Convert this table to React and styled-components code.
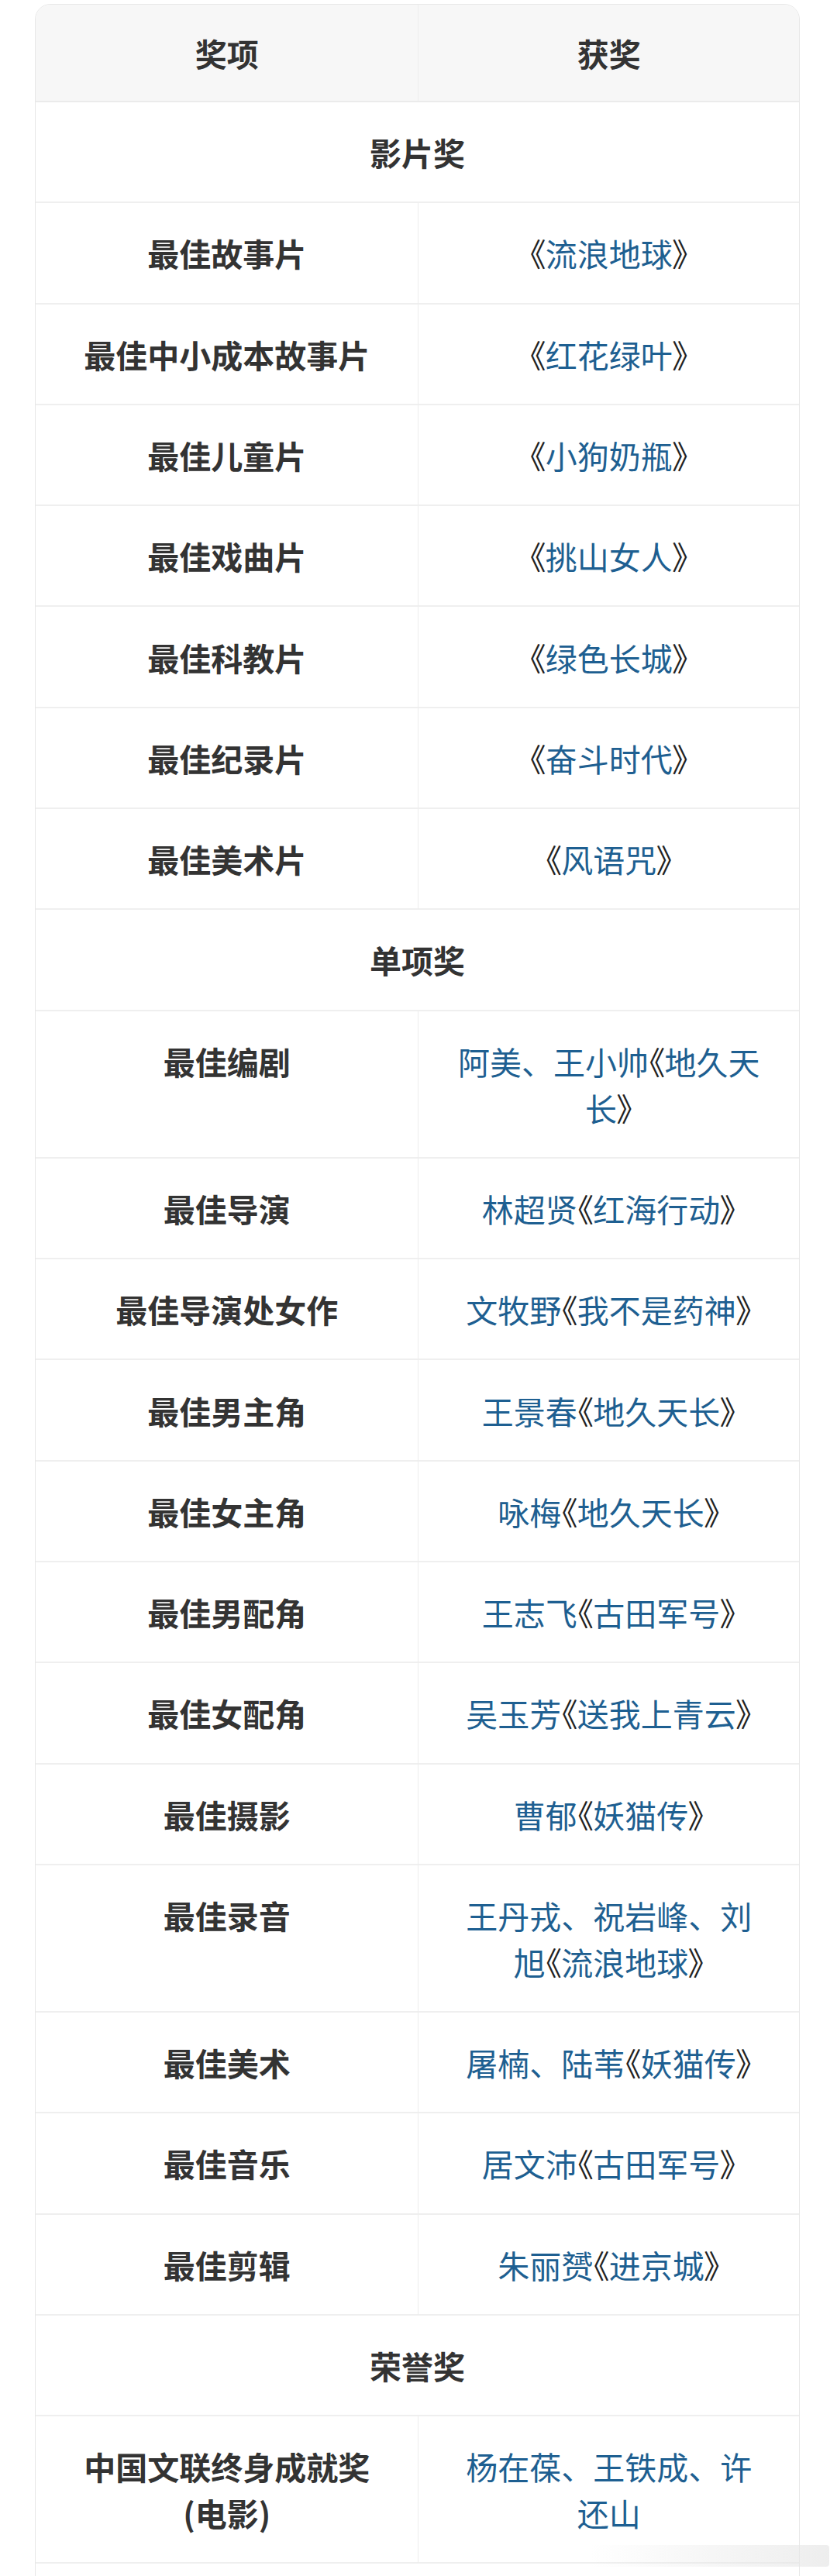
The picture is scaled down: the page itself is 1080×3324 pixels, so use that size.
import React from "react";
import styled, { createGlobalStyle } from "styled-components";

const GlobalStyle = createGlobalStyle`
  body {
    margin: 0;
    background: #fff;
    font-family: "Noto Sans CJK SC", "Noto Sans", sans-serif;
  }
`;

const Page = styled.div`
  position: relative;
  padding: 5px 0 0 45px;
  height: 3324px;
  overflow: hidden;
  box-sizing: border-box;
`;

const Table = styled.table`
  width: 987px;
  table-layout: fixed;
  border-collapse: separate;
  border-spacing: 0;
  border: 1px solid #e7e7e7;
  border-radius: 20px;
  font-size: 41px;
  line-height: 60px;
  color: #333;
`;

const HeadCell = styled.th`
  background: #f7f7f7;
  padding: 32px 20px;
  font-weight: 700;
  text-align: center;
  border-bottom: 2px solid #ebebeb;
  border-right: ${(p) => (p.$first ? "1px solid #ececec" : "none")};
  border-top-left-radius: ${(p) => (p.$first ? "19px" : "0")};
  border-top-right-radius: ${(p) => (p.$first ? "0" : "19px")};
`;

const Cell = styled.td`
  padding: 34.15px 20px;
  text-align: center;
  vertical-align: top;
  border-bottom: 2px solid #efefef;
  font-weight: ${(p) => (p.$bold ? 700 : 400)};
  border-right: ${(p) => (p.$left ? "1px solid #ececec" : "none")};
`;

const Name = styled.span`
  color: #1e5f91;
`;

const Mark = styled.span`
  color: #222;
  font-feature-settings: "palt";
`;

const Smudge = styled.div`
  position: absolute;
  left: 760px;
  top: 3284px;
  width: 310px;
  height: 28px;
  background: linear-gradient(90deg, rgba(235, 235, 235, 0), rgba(230, 230, 230, 0.7));
  border-radius: 4px;
`;

const Book = ({ children }) => (
  <>
    <Mark>《</Mark>
    <Name>{children}</Name>
    <Mark>》</Mark>
  </>
);

const Row = ({ label, children }) => (
  <tr>
    <Cell $left $bold>
      {label}
    </Cell>
    <Cell>{children}</Cell>
  </tr>
);

const Section = ({ children }) => (
  <tr>
    <Cell colSpan={2} $bold>
      {children}
    </Cell>
  </tr>
);

const filmAwards = [
  ["最佳故事片", "流浪地球"],
  ["最佳中小成本故事片", "红花绿叶"],
  ["最佳儿童片", "小狗奶瓶"],
  ["最佳戏曲片", "挑山女人"],
  ["最佳科教片", "绿色长城"],
  ["最佳纪录片", "奋斗时代"],
  ["最佳美术片", "风语咒"],
];

const singleAwards = [
  ["最佳导演", "林超贤", "红海行动"],
  ["最佳导演处女作", "文牧野", "我不是药神"],
  ["最佳男主角", "王景春", "地久天长"],
  ["最佳女主角", "咏梅", "地久天长"],
  ["最佳男配角", "王志飞", "古田军号"],
  ["最佳女配角", "吴玉芳", "送我上青云"],
  ["最佳摄影", "曹郁", "妖猫传"],
];

const laterAwards = [
  ["最佳美术", "屠楠、陆苇", "妖猫传"],
  ["最佳音乐", "居文沛", "古田军号"],
  ["最佳剪辑", "朱丽赟", "进京城"],
];

export default function App() {
  return (
    <>
      <GlobalStyle />
      <Page>
        <Table>
          <colgroup>
            <col style={{ width: "50.2%" }} />
            <col />
          </colgroup>
          <thead>
            <tr>
              <HeadCell $first>奖项</HeadCell>
              <HeadCell>获奖</HeadCell>
            </tr>
          </thead>
          <tbody>
            <Section>影片奖</Section>
            {filmAwards.map(([label, film]) => (
              <Row key={label} label={label}>
                <Book>{film}</Book>
              </Row>
            ))}
            <Section>单项奖</Section>
            <Row label="最佳编剧">
              <Name>阿美、王小帅</Name>
              <Mark>《</Mark>
              <Name>地久天</Name>
              <br />
              <Name>长</Name>
              <Mark>》</Mark>
            </Row>
            {singleAwards.map(([label, who, film]) => (
              <Row key={label} label={label}>
                <Name>{who}</Name>
                <Book>{film}</Book>
              </Row>
            ))}
            <Row label="最佳录音">
              <Name>王丹戎、祝岩峰、刘</Name>
              <br />
              <Name>旭</Name>
              <Book>流浪地球</Book>
            </Row>
            {laterAwards.map(([label, who, film]) => (
              <Row key={label} label={label}>
                <Name>{who}</Name>
                <Book>{film}</Book>
              </Row>
            ))}
            <Section>荣誉奖</Section>
            <Row
              label={
                <>
                  中国文联终身成就奖
                  <br />
                  (电影)
                </>
              }
            >
              <Name>
                杨在葆、王铁成、许
                <br />
                还山
              </Name>
            </Row>
            <Section>&nbsp;</Section>
          </tbody>
        </Table>
        <Smudge />
      </Page>
    </>
  );
}
